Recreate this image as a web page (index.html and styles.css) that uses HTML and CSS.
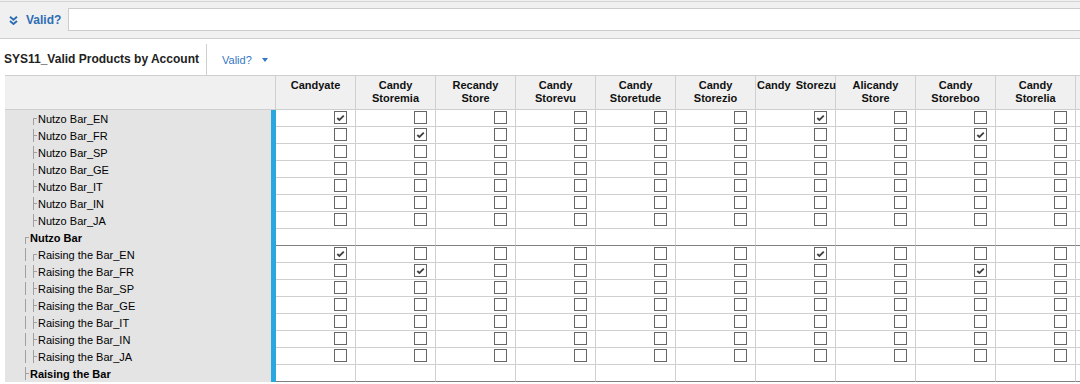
FILE: index.html
```html
<!DOCTYPE html>
<html lang="en">
<head>
    <meta charset="UTF-8">
    <meta name="viewport" content="width=device-width, initial-scale=1.0">
    <title>Valid Products by Account</title>
    <link rel="stylesheet" href="styles.css">
</head>
<body>
    <!-- Filter bar -->
    <div class="filterbar">
        <div class="filterbar-inner">
            <div class="filter-label">
                <svg class="chevrons" width="9" height="9" viewBox="0 0 9 9">
                    <path d="M1 0.8 L4.5 3.8 L8 0.8 M1 5 L4.5 8 L8 5" fill="none" stroke="#2d6db4" stroke-width="1.9"/>
                </svg>
                <span>Valid?</span>
            </div>
            <input type="text" class="filter-input">
        </div>
    </div>

    <!-- Title bar -->
    <div class="titlebar">
        <div class="title">SYS11_Valid Products by Account</div>
        <div class="views">
            <span>Valid?</span>
            <span class="caret"></span>
        </div>
    </div>

    <!-- Grid -->
    <div class="grid">
        <div class="row head">
            <div class="name"></div>
            <div class="col">Candyate</div>
            <div class="col">Candy Storemia</div>
            <div class="col">Recandy Store</div>
            <div class="col">Candy Storevu</div>
            <div class="col">Candy Storetude</div>
            <div class="col">Candy Storezio</div>
            <div class="col nowrap">Candy Storezu</div>
            <div class="col">Alicandy Store</div>
            <div class="col">Candy Storeboo</div>
            <div class="col">Candy Storelia</div>
            <div class="col"></div>
        </div>
        <div id="body"></div>
    </div>

    <script>
        const langs = ['EN', 'FR', 'SP', 'GE', 'IT', 'IN', 'JA'];
        const columns = 11;
        // checked columns for each language row
        const checked = { EN: [0, 6], FR: [1, 8] };

        const groups = [
            { name: 'Nutzo Bar', first: true },
            { name: 'Raising the Bar', first: false }
        ];

        function cells(lang) {
            let html = '';
            for (let i = 0; i < columns; i++) {
                if (lang === null) {
                    html += '<div class="cell"></div>';
                } else {
                    const on = (checked[lang] || []).includes(i);
                    html += '<div class="cell"><span class="box">' +
                        (on ? '<svg width="11" height="11" viewBox="0 0 11 11"><path d="M2.3 6 L4.4 8 L8.8 3.6" fill="none" stroke="#404040" stroke-width="1.8"/></svg>' : '') +
                        '</span></div>';
                }
            }
            return html;
        }

        let out = '';
        groups.forEach(function (g) {
            langs.forEach(function (lang, i) {
                const guide = g.first ? '<i class="b"></i>' : '<i class="g"></i>';
                const tee = i === 0 ? '<i class="c"></i>' : '<i class="t"></i>';
                out += '<div class="row"><div class="name">' + guide + tee +
                    '<span>' + g.name + '_' + lang + '</span></div>' + cells(lang) + '</div>';
            });
            out += '<div class="row group"><div class="name">' +
                (g.first ? '<i class="c"></i>' : '<i class="t"></i>') +
                '<span>' + g.name + '</span></div>' + cells(null) + '</div>';
        });
        document.getElementById('body').innerHTML = out;
    </script>
</body>
</html>
```

FILE: styles.css
```css
/* General */
body {
    margin: 0;
    font-family: "Liberation Sans", Arial, sans-serif;
    background: #ffffff;
    overflow: hidden;
    height: 384px;
}

/* Filter bar */
.filterbar {
    background: #f0f0f0;
    padding-top: 1px;
    border-bottom: 1px solid #cfcfcf;
}

.filterbar-inner {
    border-top: 1px solid #d4d4d4;
    height: 37px;
    display: flex;
    align-items: flex-start;
    padding-top: 6px;
    box-sizing: border-box;
    padding-left: 9px;
}

.filter-label {
    width: 59px;
    height: 23px;
    display: flex;
    align-items: center;
    gap: 8px;
    font-size: 12px;
    font-weight: bold;
    color: #2d6db4;
}

.chevrons {
    margin-top: 2px;
}

.filter-input {
    flex: 1;
    height: 23px;
    margin: 0 -20px 0 0;
    padding: 0;
    border: 1px solid #cccccc;
    background: #ffffff;
    box-sizing: border-box;
}

/* Title bar */
.titlebar {
    display: flex;
    height: 36px;
}

.title {
    width: 206px;
    box-sizing: border-box;
    padding: 4px 0 0 4px;
    display: flex;
    align-items: center;
    font-size: 12px;
    font-weight: bold;
    color: #222222;
}

.views {
    margin-top: 5px;
    border-left: 1px solid #cfcfcf;
    padding: 0 0 0 15px;
    display: flex;
    align-items: center;
    font-size: 11px;
    color: #3577c2;
}

.caret {
    margin-left: 10px;
    margin-top: 1px;
    width: 0;
    height: 0;
    border-top: 4px solid #3577c2;
    border-left: 3.5px solid transparent;
    border-right: 3.5px solid transparent;
}

/* Grid */
.grid {
    margin-left: 5px;
    border-top: 1px solid #cfcfcf;
    overflow: hidden;
}

.row {
    display: flex;
    width: 1151px;
}

.name {
    flex: 0 0 271px;
    min-width: 0;
    box-sizing: border-box;
    height: 17px;
    background: #e4e4e4;
    border-right: 5px solid #29a7e1;
    padding-left: 20px;
    display: flex;
    align-items: center;
    font-size: 11px;
    color: #000000;
    white-space: nowrap;
}

.cell {
    flex: 0 0 80px;
    min-width: 0;
    box-sizing: border-box;
    height: 17px;
    border-right: 1px solid #cfcfcf;
    border-bottom: 1px solid #cfcfcf;
    display: flex;
    justify-content: flex-end;
    align-items: center;
    padding: 0 8px 1px 0;
}

.group .name {
    font-weight: bold;
}

.group .cell {
    border-bottom-color: #808080;
}

/* Header */
.head .name {
    height: 34px;
    background: #f0f0f0;
    border-right: 1px solid #cfcfcf;
    border-bottom: 1px solid #cfcfcf;
}

.col {
    flex: 0 0 80px;
    min-width: 0;
    box-sizing: border-box;
    height: 34px;
    background: #f0f0f0;
    border-right: 1px solid #cfcfcf;
    border-bottom: 1px solid #cfcfcf;
    padding: 3px 1px 0;
    text-align: center;
    font-size: 11px;
    font-weight: bold;
    line-height: 13px;
    color: #111111;
}

.col.nowrap {
    white-space: nowrap;
    word-spacing: 2px;
    text-align: left;
    padding-left: 1px;
}

/* Checkbox */
.box {
    width: 13px;
    height: 13px;
    box-sizing: border-box;
    border: 1px solid #666666;
    background: #ffffff;
    display: flex;
}

/* Tree guides */
.name i {
    display: inline-block;
    flex: 0 0 8px;
    height: 13px;
}

.name i.g {
    background: linear-gradient(#a0a0a0, #a0a0a0) 0 0 / 1px 13px no-repeat;
}

.name i.t {
    flex-basis: 5px;
    background:
        linear-gradient(#a0a0a0, #a0a0a0) 0 0 / 1px 13px no-repeat,
        linear-gradient(#a0a0a0, #a0a0a0) 0 6px / 4px 1px no-repeat;
}

.name i.c {
    flex-basis: 5px;
    background:
        linear-gradient(#a0a0a0, #a0a0a0) 0 6px / 1px 7px no-repeat,
        linear-gradient(#a0a0a0, #a0a0a0) 0 6px / 4px 1px no-repeat;
}
```
